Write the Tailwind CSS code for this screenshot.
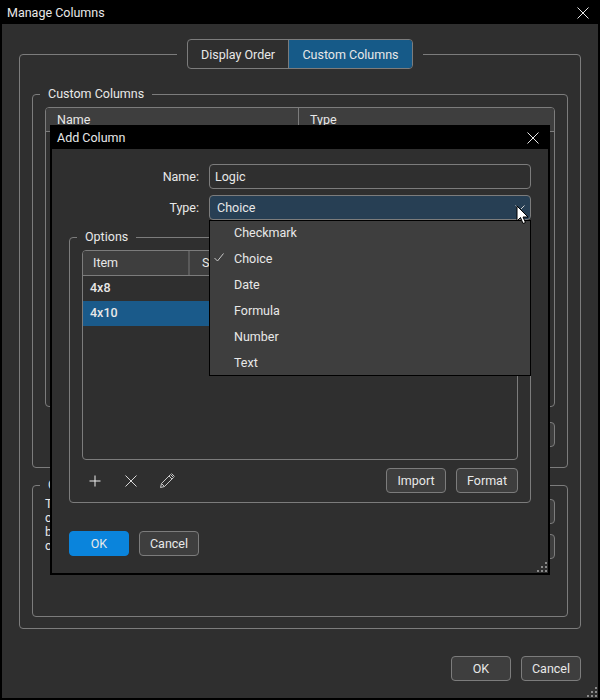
<!DOCTYPE html>
<html lang="en">
<head>
    <meta charset="UTF-8">
    <title>Manage Columns</title>
    <script src="https://cdn.jsdelivr.net/npm/@tailwindcss/browser@4"></script>
</head>
<body class="bg-black font-['Roboto',sans-serif] text-[12.5px] leading-[15px] text-[#e8e8e8] overflow-hidden">
<div class="relative w-[600px] h-[700px] flex flex-col bg-black">
    <!-- main window -->
    <header class="h-6 flex items-center justify-between pl-[7px] pr-[11px] shrink-0">
        <span class="mt-px">Manage Columns</span>
        <svg class="mt-[2px]" width="12" height="12" viewBox="0 0 12 12" stroke="#e8e8e8" fill="none"><path d="M.5.5l11 11M11.5.5l-11 11"/></svg>
    </header>
    <main class="relative flex-1 mx-0.5 mb-0.5 bg-[#2f2f2f] flex flex-col">
        <section class="relative ml-[17px] mr-[17px] mt-[30px] h-[575px] border border-[#7c7c7c] rounded-[4px]">
            <!-- tabs -->
            <div class="absolute left-[157px] top-[-16px] pl-2.5 pr-2.5 bg-[#2f2f2f]">
                <div class="flex w-[226px] h-[30px] rounded-[4px] border border-[#7c7c7c] overflow-hidden">
                    <div class="w-[101px] flex items-center justify-center border-r border-[#7c7c7c]">Display Order</div>
                    <div class="flex-1 flex items-center justify-center bg-[#165a88]">Custom Columns</div>
                </div>
            </div>

            <div class="relative ml-3 mr-3 mt-[39px] h-[374px] border border-[#7c7c7c] rounded-[4px]">
                <span class="absolute left-[7px] top-[-9px] px-2 bg-[#2f2f2f]">Custom Columns</span>
                <div class="mx-3 mt-3 h-[300px] border border-[#7c7c7c] rounded-[4px] overflow-hidden">
                    <div class="flex h-6 bg-[#3e3e3e] border-b border-[#7c7c7c]">
                        <div class="w-[253px] pl-[11px] pt-1 border-r border-[#7c7c7c]">Name</div>
                        <div class="flex-1 pl-[11px] pt-1">Type</div>
                    </div>
                </div>
                <div class="mt-[15px] mr-3 ml-auto w-[60px] h-[25px] border border-[#7c7c7c] rounded-[4px] bg-[#3e3e3e]"></div>
            </div>

            <div class="relative ml-3 mr-3 mt-[17px] h-[132px] border border-[#7c7c7c] rounded-[4px]">
                <span class="absolute left-[7px] top-[-9px] px-2 bg-[#2f2f2f]">Column</span>
                <div class="flex justify-between pl-3 pr-3 pt-[3px]">
                    <p class="mt-2 leading-[14px]">T<br>c<br>b<br>c</p>
                    <div class="flex flex-col gap-2.5 pt-2.5">
                        <div class="w-[60px] h-[25px] border border-[#7c7c7c] rounded-[4px] bg-[#3e3e3e]"></div>
                        <div class="w-[60px] h-[25px] border border-[#7c7c7c] rounded-[4px] bg-[#3e3e3e]"></div>
                    </div>
                </div>
            </div>
        </section>

        <footer class="flex justify-end gap-2.5 mr-[17px] mt-[27px]">
            <button class="w-[60px] h-[25px] border border-[#7c7c7c] rounded-[4px] bg-[#3e3e3e]">OK</button>
            <button class="w-[60px] h-[25px] border border-[#7c7c7c] rounded-[4px] bg-[#3e3e3e]">Cancel</button>
        </footer>

        <!-- resize grip -->
        <svg class="absolute right-0 bottom-0" width="11" height="11" fill="#8a8a8a"><path d="M8 0h2v2H8zM4 4h2v2H4zM8 4h2v2H8zM0 8h2v2H0zM4 8h2v2H4zM8 8h2v2H8z"/></svg>
    </main>

    <!-- add column dialog -->
    <div class="absolute left-[50px] top-[125px] w-[500px] h-[450px] flex flex-col bg-black">
        <header class="h-6 flex items-center justify-between pl-[7px] pr-[11px] shrink-0">
            <span>Add Column</span>
            <svg class="mt-[2px]" width="12" height="12" viewBox="0 0 12 12" stroke="#e8e8e8" fill="none"><path d="M.5.5l11 11M11.5.5l-11 11"/></svg>
        </header>
        <div class="relative flex-1 mx-0.5 mb-0.5 bg-[#2f2f2f] flex flex-col pl-[17px] pr-[17px] pt-[15px]">
            <div class="flex items-center h-[25px]">
                <label class="w-[130px] text-right pr-0">Name:</label>
                <div class="ml-2.5 flex-1 h-[25px] flex items-center pl-[5px] border border-[#7c7c7c] rounded-[4px]">Logic</div>
            </div>
            <div class="flex items-center h-[25px] mt-1.5">
                <label class="w-[130px] text-right">Type:</label>
                <div class="ml-2.5 flex-1 h-[25px] flex items-center justify-between pl-[7px] pr-[5px] border border-[#7c7c7c] rounded-[4px] bg-[#273f54]">
                    <span>Choice</span>
                    <svg width="10" height="6" viewBox="0 0 10 6" stroke="#d0d0d0" fill="none"><path d="M.5.5L5 5 9.500.5"/></svg>
                </div>
            </div>

            <fieldset class="relative mt-[17px] h-[266px] border border-[#7c7c7c] rounded-[4px] px-3 pt-3">
                <span class="absolute left-[7px] top-[-9px] px-2 bg-[#2f2f2f]">Options</span>
                <div class="h-[210px] border border-[#7c7c7c] rounded-[4px] overflow-hidden">
                    <div class="flex h-[25px] bg-[#3e3e3e] border-b border-[#7c7c7c]">
                        <div class="w-[107px] pl-[10px] pb-px flex items-center border-r-2 border-[#5a5a5a]">Item</div>
                        <div class="flex-1 pl-3 pb-px flex items-center">Sort</div>
                    </div>
                    <div class="h-[25px] flex items-center pl-[7px] pb-[3px] font-medium">4x8</div>
                    <div class="h-[25px] flex items-center pl-[7px] pb-[3px] font-medium bg-[#1a5a8a]">4x10</div>
                </div>
                <div class="flex items-center mt-2 h-[25px]">
                    <svg class="ml-[7px]" width="12" height="12" viewBox="0 0 12 12" stroke="#f0f0f0" fill="none"><path d="M6 .5v11M.5 6h11"/></svg>
                    <svg class="ml-6" width="12" height="12" viewBox="0 0 12 12" stroke="#d8d8d8" fill="none"><path d="M.5.5l11 11M11.5.5l-11 11"/></svg>
                    <svg class="ml-[22px]" width="17" height="17" viewBox="0 0 17 17" stroke="#c8c8c8" fill="none"><path d="M1.500 15.500l1-4L11.500 2.500l3 3-9 9zM2.500 11.500l3 3M10 4l3 3M12.500 1.500l3 3"/></svg>
                    <button class="ml-auto w-[60px] h-[25px] border border-[#7c7c7c] rounded-[4px] bg-[#3e3e3e]">Import</button>
                    <button class="ml-2.5 w-[62px] h-[25px] border border-[#7c7c7c] rounded-[4px] bg-[#3e3e3e]">Format</button>
                </div>
            </fieldset>

            <div class="flex gap-2.5 mt-[28px]">
                <button class="w-[60px] h-[25px] rounded-[4px] bg-[#0a84dc] border border-[#0a84dc]">OK</button>
                <button class="w-[60px] h-[25px] border border-[#7c7c7c] rounded-[4px] bg-[#3e3e3e]">Cancel</button>
            </div>

            <svg class="absolute right-0 bottom-0" width="11" height="11" fill="#8a8a8a"><path d="M8 0h2v2H8zM4 4h2v2H4zM8 4h2v2H8zM0 8h2v2H0zM4 8h2v2H4zM8 8h2v2H8z"/></svg>

            <!-- open dropdown -->
            <ul class="absolute left-[157px] top-[71px] w-[322px] h-[156px] bg-[#3e3e3e] border border-black">
                <li class="h-[26px] flex items-center pl-6 pb-[3px]">Checkmark</li>
                <li class="relative h-[26px] flex items-center pl-6 pb-[3px]">
                    <svg class="absolute left-[4px] top-[6px]" width="10" height="9" viewBox="0 0 10 9" stroke="#c8c8c8" fill="none"><path d="M.5 5l3 3L9.500.5"/></svg>
                    Choice
                </li>
                <li class="h-[26px] flex items-center pl-6 pb-[3px]">Date</li>
                <li class="h-[26px] flex items-center pl-6 pb-[3px]">Formula</li>
                <li class="h-[26px] flex items-center pl-6 pb-[3px]">Number</li>
                <li class="h-[26px] flex items-center pl-6 pb-[3px]">Text</li>
            </ul>
        </div>
    </div>

    <!-- mouse pointer -->
    <svg class="absolute left-[516px] top-[205px]" width="13" height="20" viewBox="0 0 13 20"><path d="M1 1v15l3.500-3.500 2.500 6 2.500-1-2.500-5.500h5z" fill="#fff" stroke="#000"/></svg>
</div>
</body>
</html>
